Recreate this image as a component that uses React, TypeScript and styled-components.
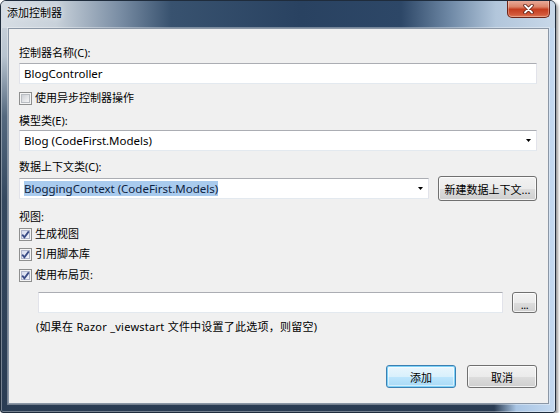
import React from "react";
import styled, { createGlobalStyle, css } from "styled-components";

const GlobalStyle = createGlobalStyle`
  html, body { margin: 0; padding: 0; background: #ffffff; }
  body {
    font-family: "Noto Sans", "Noto Sans CJK SC", sans-serif;
    font-size: 11px;
    color: #000;
  }
  *, *::before, *::after { box-sizing: border-box; }
`;

const Window = styled.div`
  width: 556px;
  height: 413px;
  display: flex;
  flex-direction: column;
  border: 1px solid #1f2c3c;
  border-radius: 6px 6px 3px 3px;
  overflow: hidden;
  box-shadow: 2px 2px 3px rgba(0, 0, 0, 0.4), inset 0 0 0 1px rgba(255, 255, 255, 0.35);
  background:
    linear-gradient(90deg, rgba(190, 212, 238, 0) 0%, rgba(190, 212, 238, 0) 89%, #a9c5e4 93%, #c4d9f0 100%),
    linear-gradient(180deg, #d2d9e1 0px, #b8c4d0 55px, #55697f 115px, #34485f 200px, #2a3c53 100%);
`;

const TitleBar = styled.div`
  flex: none;
  height: 27px;
  display: flex;
  align-items: flex-start;
  justify-content: space-between;
  padding: 0 5px 0 6px;
  background: linear-gradient(90deg,
    #d6dde4 0px, #c8d1da 55px, #788ca3 120px, #38526f 170px,
    #294261 300px, #2d4767 400px, #708aa7 450px, #b2c6db 495px, #c8d8e9 100%);
`;

const TitleText = styled.span`
  margin-top: 4px;
  line-height: 16px;
  font-size: 11px;
  color: #000;
  text-shadow: 0 0 6px rgba(255, 255, 255, 0.8);
`;

const CloseButton = styled.div`
  width: 43px;
  height: 18px;
  margin-top: -1px;
  display: flex;
  align-items: center;
  justify-content: center;
  border: 1px solid #6e2518;
  border-top: none;
  border-radius: 0 0 5px 5px;
  background: linear-gradient(180deg, #eab0a0 0%, #dc8469 40%, #c53d1f 55%, #d2583a 85%, #e07a56 100%);
  box-shadow: inset 0 0 0 1px rgba(255, 255, 255, 0.3);
`;

const Client = styled.div`
  flex: 1;
  margin: 0 6px 8px 7px;
  border: 1px solid #8b97a6;
  box-shadow: 0 0 0 1px rgba(255, 255, 255, 0.35);
  background: #f0f0f0;
  display: flex;
  flex-direction: column;
  padding: 16px 11px 15px 10px;
`;

const FieldLabel = styled.div<{ $mt?: number }>`
  margin-top: ${(p) => p.$mt ?? 0}px;
  height: 16px;
  line-height: 16px;
  font-size: 11px;
  white-space: nowrap;
`;

const boxBorder = css`
  border: 1px solid #e2e3ea;
  border-top-color: #abadb3;
  border-bottom-color: #e3e9ef;
  background: #ffffff;
`;

const TextBox = styled.div<{ $mt?: number; $grow?: boolean }>`
  ${boxBorder}
  margin-top: ${(p) => p.$mt ?? 0}px;
  height: 21px;
  flex: ${(p) => (p.$grow ? "1 1 0" : "none")};
  padding: 0 4px;
  line-height: 19px;
  font-size: 11.5px;
  white-space: nowrap;
`;

const ComboBox = styled.div<{ $mt?: number; $grow?: boolean }>`
  ${boxBorder}
  margin-top: ${(p) => p.$mt ?? 0}px;
  height: 21px;
  flex: ${(p) => (p.$grow ? "1 1 0" : "none")};
  display: flex;
  align-items: center;
  justify-content: space-between;
  padding: 0 5px 0 4px;
  font-size: 11.5px;
  white-space: nowrap;
`;

const ComboText = styled.span<{ $selected?: boolean }>`
  line-height: 15px;
  ${(p) =>
    p.$selected &&
    css`
      background: #a9cbee;
      color: #0d2240;
    `}
`;

const Row = styled.div<{ $mt?: number; $indent?: number; $gap?: number }>`
  margin-top: ${(p) => p.$mt ?? 0}px;
  padding-left: ${(p) => p.$indent ?? 0}px;
  display: flex;
  align-items: center;
  gap: ${(p) => p.$gap ?? 9}px;
`;

const CheckRow = styled.label<{ $mt?: number }>`
  margin-top: ${(p) => p.$mt ?? 0}px;
  height: 16px;
  display: flex;
  align-items: center;
  gap: 3px;
  font-size: 11px;
  line-height: 16px;
  white-space: nowrap;
`;

const CheckBox = styled.span<{ $checked?: boolean }>`
  width: 13px;
  height: 13px;
  flex: none;
  display: flex;
  align-items: center;
  justify-content: center;
  border: 1px solid #8e8f8f;
  background: #f4f4f4;
  position: relative;
  &::before {
    content: "";
    position: absolute;
    inset: 1px;
    border: 1px solid ${(p) => (p.$checked ? "#b0b6cc" : "#b9bdc2")};
    background: ${(p) =>
      p.$checked
        ? "linear-gradient(135deg, #d6dbee 0%, #f4f5fb 100%)"
        : "linear-gradient(135deg, #cdd0d5 0%, #f5f5f6 100%)"};
  }
  svg { position: relative; }
`;

const Button = styled.div<{ $w: number; $h: number; $default?: boolean }>`
  width: ${(p) => p.$w}px;
  height: ${(p) => p.$h}px;
  flex: none;
  display: flex;
  align-items: center;
  justify-content: center;
  border: 1px solid #707070;
  border-radius: 3px;
  font-size: 11px;
  white-space: nowrap;
  background: linear-gradient(180deg, #f2f2f2 0%, #ebebeb 50%, #dddddd 51%, #cfcfcf 100%);
  box-shadow: inset 0 0 0 1px rgba(255, 255, 255, 0.75);
  ${(p) =>
    p.$default &&
    css`
      border-color: #3c7fb1;
      background: linear-gradient(180deg, #eaf6fd 0%, #d9f0fc 50%, #bee6fd 51%, #a7d9f5 100%);
      box-shadow: inset 0 0 0 1px #7ed2f8, inset 0 0 0 2px rgba(255, 255, 255, 0.5);
    `}
`;

const DotsText = styled.span`
  font-size: 11px;
  line-height: 11px;
  margin-top: 4px;
  letter-spacing: -0.5px;
`;

const Note = styled.div<{ $mt?: number }>`
  margin-top: ${(p) => p.$mt ?? 0}px;
  padding-left: 17px;
  height: 16px;
  line-height: 16px;
  font-size: 11px;
  letter-spacing: 0.25px;
  white-space: nowrap;
`;

const Footer = styled.div`
  margin-top: auto;
  display: flex;
  justify-content: flex-end;
  gap: 11px;
`;

const ComboArrow = () => (
  <svg width="5" height="3" viewBox="0 0 5 3">
    <polygon points="0,0 5,0 2.5,3" fill="#000" />
  </svg>
);

const CloseGlyph = () => (
  <svg width="11" height="10" viewBox="0 0 11 10">
    <path d="M2 1.5 L9 8.5 M9 1.5 L2 8.5" stroke="#5a1a10" strokeWidth="3.4" strokeLinecap="round" />
    <path d="M2 1.5 L9 8.5 M9 1.5 L2 8.5" stroke="#ffffff" strokeWidth="1.8" strokeLinecap="round" />
  </svg>
);

const Tick = () => (
  <svg width="9" height="9" viewBox="0 0 9 9">
    <path d="M1.2 4.6 L3.4 7.2 L7.8 1.4" stroke="#3b4c86" strokeWidth="1.8" fill="none" />
  </svg>
);

const Check = ({ checked, label, mt }: { checked: boolean; label: string; mt?: number }) => (
  <CheckRow $mt={mt}>
    <CheckBox $checked={checked}>{checked && <Tick />}</CheckBox>
    <span>{label}</span>
  </CheckRow>
);

export default function App() {
  return (
    <>
      <GlobalStyle />
      <Window>
        <TitleBar>
          <TitleText>添加控制器</TitleText>
          <CloseButton>
            <CloseGlyph />
          </CloseButton>
        </TitleBar>
        <Client>
          <FieldLabel>控制器名称(C):</FieldLabel>
          <TextBox $mt={2}>BlogController</TextBox>
          <Check checked={false} label="使用异步控制器操作" mt={6} />
          <FieldLabel $mt={7}>模型类(E):</FieldLabel>
          <ComboBox $mt={1}>
            <ComboText>Blog (CodeFirst.Models)</ComboText>
            <ComboArrow />
          </ComboBox>
          <FieldLabel $mt={8}>数据上下文类(C):</FieldLabel>
          <Row $mt={1} $gap={9}>
            <ComboBox $grow>
              <ComboText $selected>BloggingContext (CodeFirst.Models)</ComboText>
              <ComboArrow />
            </ComboBox>
            <Button $w={99} $h={25}>新建数据上下文...</Button>
          </Row>
          <FieldLabel $mt={8}>视图:</FieldLabel>
          <Check checked label="生成视图" mt={1} />
          <Check checked label="引用脚本库" mt={4} />
          <Check checked label="使用布局页:" mt={5} />
          <Row $mt={9} $indent={19} $gap={9}>
            <TextBox $grow />
            <Button $w={25} $h={21}>
              <DotsText>...</DotsText>
            </Button>
          </Row>
          <Note $mt={6}>(如果在 Razor _viewstart 文件中设置了此选项，则留空)</Note>
          <Footer>
            <Button $w={70} $h={23} $default>添加</Button>
            <Button $w={70} $h={23}>取消</Button>
          </Footer>
        </Client>
      </Window>
    </>
  );
}
